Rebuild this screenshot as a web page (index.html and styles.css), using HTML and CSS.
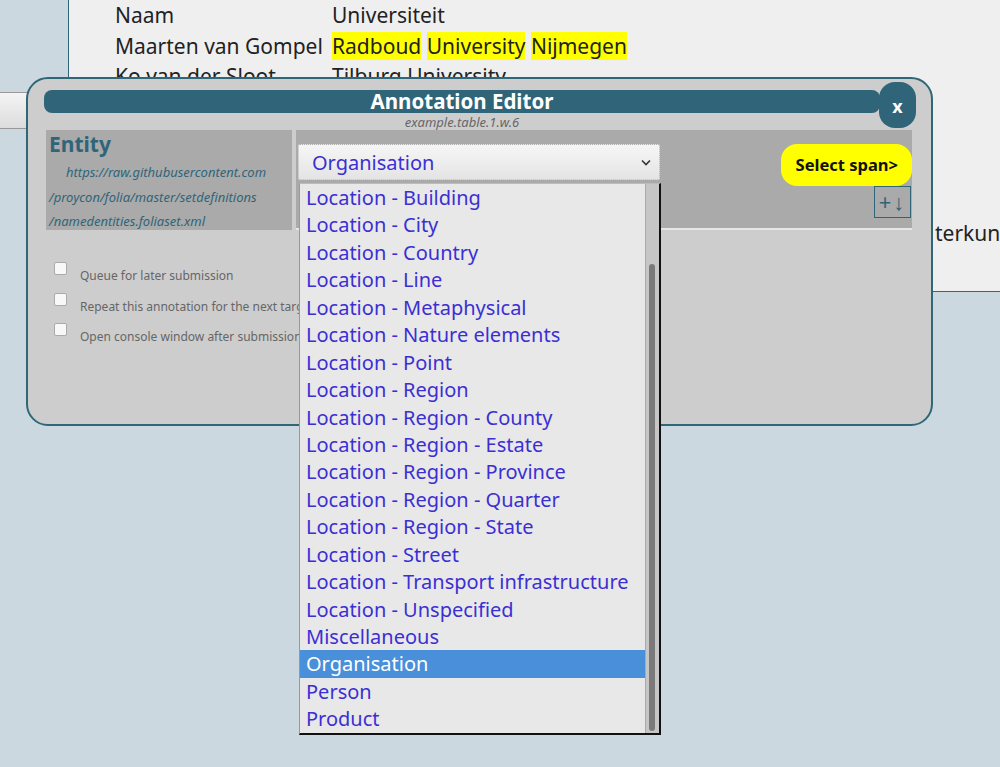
FILE: index.html
```html
<!DOCTYPE html>
<html>
<head>
<meta charset="utf-8">
<link rel="stylesheet" href="styles.css">
</head>
<body>
<div class="page">
  <div class="side"><div class="sidetab"></div></div>
  <div class="main">
    <div class="rows">
      <div class="row"><span class="c1">Naam</span><span class="c2">Universiteit</span></div>
      <div class="row"><span class="c1">Maarten van Gompel</span><span class="c2"><span class="hl">Radboud</span> <span class="hl">University</span> <span class="hl">Nijmegen</span></span></div>
      <div class="row"><span class="c1">Ko van der Sloot</span><span class="c2">Tilburg University</span></div>
    </div>
    <div class="faculty">terkunde</div>
  </div>
</div>

<div class="dialog">
  <div class="titlebar">Annotation Editor</div>
  <div class="close">x</div>
  <div class="subtitle">example.table.1.w.6</div>
  <div class="edtable">
    <div class="setcell">
      <div class="settype">Entity</div>
      <div class="seturl">
        <div class="u1">https://raw.githubusercontent.com</div>
        <div>/proycon/folia/master/setdefinitions</div>
        <div>/namedentities.foliaset.xml</div>
      </div>
    </div>
    <div class="valcell">
      <div class="select">
        <span>Organisation</span>
        <svg class="chev" width="10" height="7" viewBox="0 0 10 7"><path d="M1 1.5 L5 5.5 L9 1.5" fill="none" stroke="#333" stroke-width="1.6"/></svg>
      </div>
      <div class="actions">
        <div class="spanbtn">Select span&gt;</div>
        <div class="addbtn">+↓</div>
      </div>
    </div>
  </div>
  <div class="options">
    <label class="opt"><span class="box"></span><span class="lbl">Queue for later submission</span></label>
    <label class="opt"><span class="box"></span><span class="lbl">Repeat this annotation for the next target</span></label>
    <label class="opt"><span class="box"></span><span class="lbl">Open console window after submission</span></label>
  </div>
</div>

<div class="popup">
  <div class="items">
    <div class="item">Location - Building</div>
    <div class="item">Location - City</div>
    <div class="item">Location - Country</div>
    <div class="item">Location - Line</div>
    <div class="item">Location - Metaphysical</div>
    <div class="item">Location - Nature elements</div>
    <div class="item">Location - Point</div>
    <div class="item">Location - Region</div>
    <div class="item">Location - Region - County</div>
    <div class="item">Location - Region - Estate</div>
    <div class="item">Location - Region - Province</div>
    <div class="item">Location - Region - Quarter</div>
    <div class="item">Location - Region - State</div>
    <div class="item">Location - Street</div>
    <div class="item">Location - Transport infrastructure</div>
    <div class="item">Location - Unspecified</div>
    <div class="item">Miscellaneous</div>
    <div class="item sel">Organisation</div>
    <div class="item">Person</div>
    <div class="item">Product</div>
  </div>
  <div class="scroll"><div class="thumb"></div></div>
</div>
</body>
</html>
```

FILE: styles.css
```css
html, body {
  margin: 0;
  padding: 0;
}
body {
  background: #cbd8df;
  font-family: "Noto Sans", "Open Sans", sans-serif;
  width: 1000px;
  height: 767px;
  overflow: hidden;
  position: relative;
}
.page {
  display: flex;
  align-items: flex-start;
}
.side {
  width: 68px;
  flex: none;
}
.sidetab {
  margin-top: 92px;
  width: 28px;
  height: 35px;
  background: linear-gradient(#f4f4f4, #dcdcdc);
  border-top: 1px solid #999;
  border-bottom: 1px solid #999;
}
.main {
  flex: 1;
  height: 291px;
  background: #efefef;
  border-left: 1px solid #2f6678;
  border-bottom: 1px solid #2f6678;
  overflow: hidden;
}
.rows {
  padding-left: 46px;
}
.row {
  display: flex;
  height: 30.5px;
  line-height: 30.5px;
  font-size: 21px;
  color: #222;
}
.c1 {
  width: 217px;
  flex: none;
  white-space: nowrap;
}
.c2 {
  white-space: nowrap;
}
.hl {
  background: #ffff00;
}
.faculty {
  margin-top: 127px;
  padding-left: 866px;
  font-size: 21px;
  color: #222;
  white-space: nowrap;
}

.dialog {
  position: absolute;
  left: 26px;
  top: 77px;
  width: 903px;
  height: 345px;
  background: #cdcdcd;
  border: 2px solid #2f6678;
  border-radius: 22px;
}
.titlebar {
  margin: 11px 51px 0 16px;
  height: 23px;
  line-height: 23px;
  background: #306579;
  border-radius: 8px;
  color: #fff;
  font-weight: bold;
  font-size: 20.5px;
  text-align: center;
}
.close {
  position: absolute;
  left: 851px;
  top: 3px;
  width: 37px;
  height: 46px;
  line-height: 48px;
  border-radius: 16px;
  background: #306579;
  color: #fff;
  font-weight: bold;
  font-size: 18px;
  text-align: center;
}
.subtitle {
  margin: 1px 51px 0 16px;
  text-align: center;
  font-size: 13px;
  font-style: italic;
  color: #666;
  height: 16px;
  line-height: 16px;
}
.edtable {
  margin: 0 19px 0 18px;
  display: flex;
  gap: 4px;
  height: 100px;
}
.setcell {
  width: 246px;
  background: #aaaaaa;
  padding-left: 3px;
  box-sizing: border-box;
}
.settype {
  color: #306579;
  font-weight: bold;
  font-size: 21px;
  line-height: 28px;
  height: 30px;
}
.seturl {
  color: #306579;
  font-style: italic;
  font-size: 13px;
  line-height: 24.5px;
  white-space: nowrap;
}
.u1 {
  padding-left: 17px;
}
.valcell {
  flex: 1;
  background: #aaaaaa;
  border-bottom: 2px solid #e6e6e6;
  display: flex;
  justify-content: space-between;
  align-items: flex-start;
  padding: 14px 0 0 2px;
}
.select {
  width: 362px;
  height: 36px;
  box-sizing: border-box;
  border: 1px dotted #b0b0b0;
  background: linear-gradient(#f6f6f6, #e4e4e4);
  border-radius: 2px;
  display: flex;
  align-items: center;
  justify-content: space-between;
  padding: 0 8px 0 13px;
  font-size: 20px;
  color: #3b2fd4;
}
.chev {
  display: block;
}
.actions {
  display: flex;
  flex-direction: column;
  align-items: flex-end;
}
.spanbtn {
  background: #ffff00;
  border-radius: 16px;
  height: 42px;
  line-height: 42px;
  padding: 0 14px 0 15px;
  font-weight: bold;
  font-size: 16.5px;
  color: #111;
}
.addbtn {
  width: 35px;
  height: 30px;
  border: 1px solid #306579;
  color: #306579;
  font-size: 22px;
  line-height: 29px;
  text-align: center;
  letter-spacing: 2px;
  margin-right: 1px;
}
.options {
  margin: 32px 0 0 26px;
  display: flex;
  flex-direction: column;
  gap: 6px;
}
.opt {
  display: flex;
  align-items: flex-start;
  height: 24.5px;
  font-size: 12px;
  color: #666;
}
.box {
  width: 11px;
  height: 11px;
  border: 1px solid #aaa;
  border-radius: 2px;
  background: #f8f8f8;
  flex: none;
}
.lbl {
  margin-left: 13px;
  margin-top: 5px;
  white-space: nowrap;
}

.popup {
  position: absolute;
  left: 299px;
  top: 183px;
  width: 359px;
  height: 549px;
  background: #e8e8e8;
  border-left: 1px solid #999;
  border-top: 1px solid #bbb;
  border-right: 2px solid #111;
  border-bottom: 2px solid #111;
  display: flex;
}
.items {
  flex: 1;
}
.item {
  height: 27.45px;
  line-height: 27px;
  padding-left: 6px;
  font-size: 20px;
  color: #3b2fd4;
  white-space: nowrap;
}
.item.sel {
  background: #4a8fd9;
  color: #fff;
}
.scroll {
  width: 13px;
  background: #c6c6c6;
  border-left: 1px solid #aaa;
  position: relative;
}
.thumb {
  position: absolute;
  left: 3px;
  top: 80px;
  width: 6px;
  height: 467px;
  border-radius: 3px;
  background: #7a7a7a;
}
```
